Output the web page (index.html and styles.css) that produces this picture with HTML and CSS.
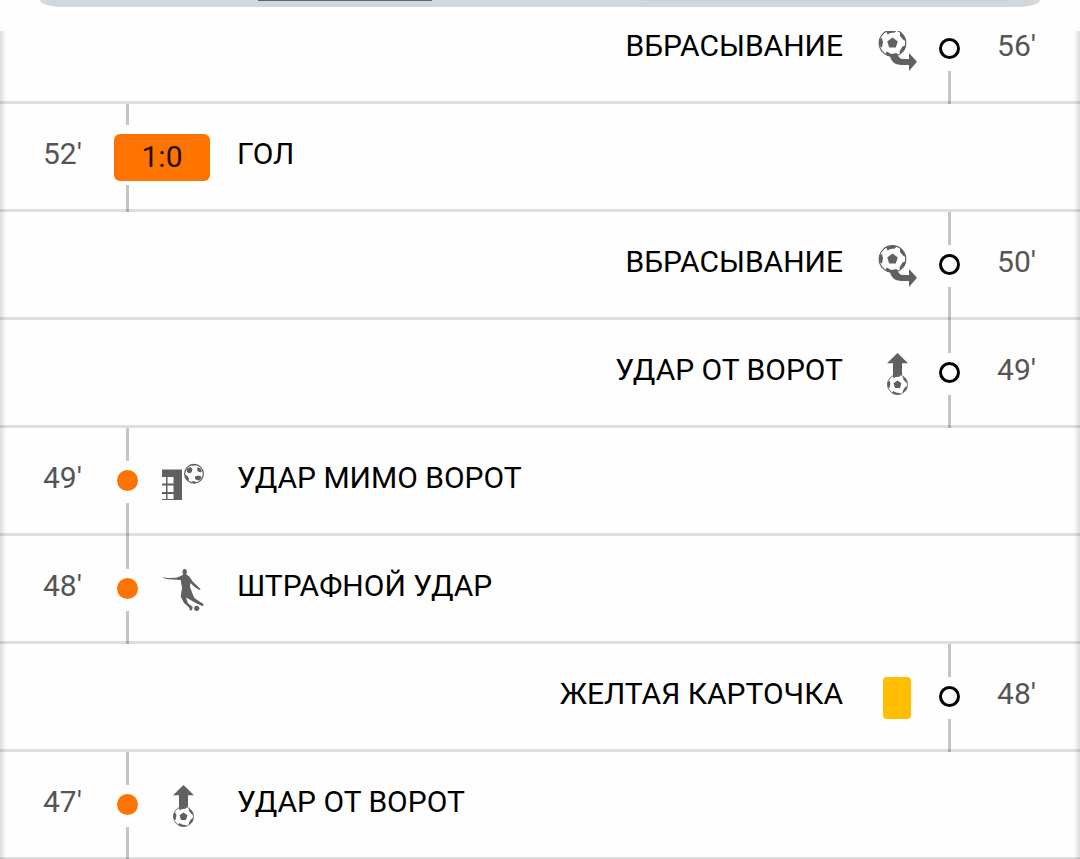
FILE: index.html
```
<!DOCTYPE html>
<html lang="ru">
<head>
<meta charset="utf-8">
<meta name="viewport" content="width=device-width, initial-scale=1">
<title>Ход матча</title>
<link rel="stylesheet" href="styles.css">
</head>
<body>
<svg class="sprite" aria-hidden="true">
  <symbol id="ball" viewBox="0 0 28 28">
    <circle cx="14" cy="14" r="13.3" fill="#fff" stroke="#606060" stroke-width="1.2"/>
    <path fill="#606060" d="M14 8.500l5.300 3.900-2 6.200h-6.600l-2-6.200zM7.500 2L14 .5l4 1-1.500 2-4.500.5-3 1.500zM21.500 3l4 4 2 5-2.500-1-3.500-4zM27.500 16l-1.500 5-4.500 4-.5-2.500 3-5zM8 22.500l5 2.500 4 .2.500 2.200-5 .4-5.500-2.300zM.5 10.500L3.500 9l1 4-1 5.500L.8 17z"/>
  </symbol>
  <symbol id="throw-in" viewBox="0 0 44 44">
    <use href="#ball" x="3" y="1" width="29" height="28"/>
    <path fill="#606060" d="M15 27c3-1.500 5.500-2 7.500-1.500.5 3.500 2.500 5.500 5.500 5.500h6v-6l8 8.700-8 9.300v-6h-7c-7.500 0-11.500-4-12-10z"/>
  </symbol>
  <symbol id="goal-kick" viewBox="0 0 44 44">
    <path fill="#606060" d="M22.500 1L33 11.300h-6V23h-9V11.300h-6z"/>
    <use href="#ball" x="12" y="22" width="21" height="21"/>
  </symbol>
  <symbol id="off-target" viewBox="0 0 44 44">
    <path fill="#606060" fill-rule="evenodd" d="M1 9.500h20V40H1zM1 17v6.500h4V17zM6.500 17v6.500h6V17zM1 25.500V32h4v-6.500zM6.500 25.500V32h6v-6.500zM1 34v5h4v-5zM6.500 34v5h6v-5z"/>
    <circle cx="33" cy="13.800" r="9.400" fill="#fff" stroke="#606060" stroke-width="1.200"/>
    <path fill="#606060" d="M26 8.500l3.500-1.500 2 2-1 3.500-3 .8-2-2zM36 7.500l3 .5 2 3-1.500 1.500-3-1.300zM24 14.500l2 1 2 3-.5 2.500-2.500-2zM34 16.500l3.500-1 3 1-1 3-2.500 1-3-1.500zM29.500 4.800l3.500-.8 3 .8-3.500 1zM30 21.500l3-.5 3 1.500-3 .8z"/>
  </symbol>
  <symbol id="free-kick" viewBox="0 0 44 44">
    <ellipse cx="23.700" cy="3.800" rx="2.200" ry="2.900" fill="#606060"/>
    <path fill="#606060" d="M1 9.300L7 10l8.300-.3 5-2 2-1.400V4H25v2.300l3 2 4 5.400 7.700 7.600-1.400.8-4.600-3.100-4.400-4-.3 4 3.300 8.700 1.400 2.600 9 6-1 2-7.400-3.600-8-4.400-1.300-.6 2 5.600 4.700 3.700-.7 3.300h-2.300l-.4-2.600-5.300-4.700-3.300-6.300 1.300-9L19.700 12l-7.700-.4-6.700-.6z"/>
    <circle cx="35.700" cy="40.300" r="2.600" fill="#606060"/>
  </symbol>
</svg>

<header class="sheet">
  <div class="panel">
    <span class="tab tab-active"></span>
    <span class="tab"></span>
  </div>
</header>

<main>
  <ol class="timeline">
    <li class="event away">
      <time class="minute">56'</time>
      <div class="rail"><span class="marker"><span class="dot"></span></span></div>
      <div class="symbol"><svg class="icon"><use href="#throw-in"/></svg></div>
      <div class="label">ВБРАСЫВАНИЕ</div>
    </li>
    <li class="event home goal">
      <time class="minute">52'</time>
      <div class="rail"><span class="marker"><span class="score">1:0</span></span></div>
      <div class="symbol"></div>
      <div class="label">ГОЛ</div>
    </li>
    <li class="event away">
      <time class="minute">50'</time>
      <div class="rail"><span class="marker"><span class="dot"></span></span></div>
      <div class="symbol"><svg class="icon"><use href="#throw-in"/></svg></div>
      <div class="label">ВБРАСЫВАНИЕ</div>
    </li>
    <li class="event away">
      <time class="minute">49'</time>
      <div class="rail"><span class="marker"><span class="dot"></span></span></div>
      <div class="symbol"><svg class="icon"><use href="#goal-kick"/></svg></div>
      <div class="label">УДАР ОТ ВОРОТ</div>
    </li>
    <li class="event home">
      <time class="minute">49'</time>
      <div class="rail"><span class="marker"><span class="dot"></span></span></div>
      <div class="symbol"><svg class="icon"><use href="#off-target"/></svg></div>
      <div class="label">УДАР МИМО ВОРОТ</div>
    </li>
    <li class="event home">
      <time class="minute">48'</time>
      <div class="rail"><span class="marker"><span class="dot"></span></span></div>
      <div class="symbol"><svg class="icon"><use href="#free-kick"/></svg></div>
      <div class="label">ШТРАФНОЙ УДАР</div>
    </li>
    <li class="event away">
      <time class="minute">48'</time>
      <div class="rail"><span class="marker"><span class="dot"></span></span></div>
      <div class="symbol"><span class="card"></span></div>
      <div class="label">ЖЕЛТАЯ КАРТОЧКА</div>
    </li>
    <li class="event home">
      <time class="minute">47'</time>
      <div class="rail"><span class="marker"><span class="dot"></span></span></div>
      <div class="symbol"><svg class="icon"><use href="#goal-kick"/></svg></div>
      <div class="label">УДАР ОТ ВОРОТ</div>
    </li>
  </ol>
</main>
</body>
</html>
```
FILE: styles.css
```
* {
  box-sizing: border-box;
}

html {
  height: 100%;
  overflow: hidden;
}

body {
  margin: 0;
  height: 100%;
  overflow: hidden;
  background: #fefefe;
  color: #000;
  font-family: Roboto, "Noto Sans", sans-serif;
  font-size: 30px;
  line-height: 30px;
}

.sprite {
  position: absolute;
  width: 0;
  height: 0;
}

.sheet {
  height: 31px;
  padding: 0 40px;
}

.panel {
  display: grid;
  grid-template-columns: 174px 1fr;
  column-gap: 212px;
  height: 7px;
  padding: 0 32px 0 218px;
  overflow: hidden;
  background: #d2d7dc;
  border-radius: 0 0 24px 24px / 0 0 7px 7px;
}

.tab {
  height: 1px;
  background: #cbd0d5;
}

.tab-active {
  background: #626475;
}

.timeline {
  display: flow-root;
  position: relative;
  margin: 0;
  padding: 0;
  list-style: none;
}

.timeline::before,
.timeline::after {
  content: "";
  position: absolute;
  top: 0;
  bottom: 0;
  width: 6px;
}

.timeline::before {
  left: 0;
  background: linear-gradient(to right, #00000022, #00000000);
}

.timeline::after {
  right: 0;
  background: linear-gradient(to left, #00000022, #00000000);
}

.event {
  display: flex;
  height: 108px;
  padding: 0 44px 0 43px;
  box-shadow: inset 0 -3px #dedede;
}

.away {
  flex-direction: row-reverse;
}

.minute {
  width: 67px;
  padding-top: 35px;
  color: #555;
}

.away .minute {
  width: 69px;
  text-align: right;
}

.rail {
  display: flex;
  flex-direction: column;
  align-items: center;
  width: 35px;
}

.rail::before,
.rail::after {
  content: "";
  width: 3px;
  background: #0000003a;
}

.rail::before {
  height: 33px;
}

.rail::after {
  flex: 1;
}

.marker {
  display: flex;
  justify-content: center;
  width: 100%;
  height: 42px;
  padding-top: 9px;
}

.dot {
  width: 21px;
  height: 21px;
  border-radius: 50%;
  background: #ff7300;
}

.away .dot {
  border: 3px solid #000;
  background: none;
}

.goal .rail::before {
  height: 21px;
}

.goal .marker {
  justify-content: flex-start;
  height: 60px;
  padding-left: 4px;
}

.score {
  flex: none;
  width: 96px;
  height: 47px;
  border-radius: 6px;
  background: #ff7300;
  color: #210f00;
  line-height: 46px;
  text-align: center;
}

.symbol {
  display: flex;
  align-items: center;
  justify-content: center;
  width: 76px;
}

.away .symbol {
  width: 71px;
}

.icon {
  width: 44px;
  height: 44px;
}

.card {
  width: 28px;
  height: 42px;
  border-radius: 4px;
  background: #ffbf00;
}

.label {
  padding: 35px 18px 0 16px;
}

/* The list is scrolled so that its first row starts part-way under the header. */
.event:first-child {
  margin-top: -35px;
}

.event:first-child .rail::before {
  visibility: hidden;
}

.event:first-child .icon {
  clip-path: inset(3px 0 0);
}
```
